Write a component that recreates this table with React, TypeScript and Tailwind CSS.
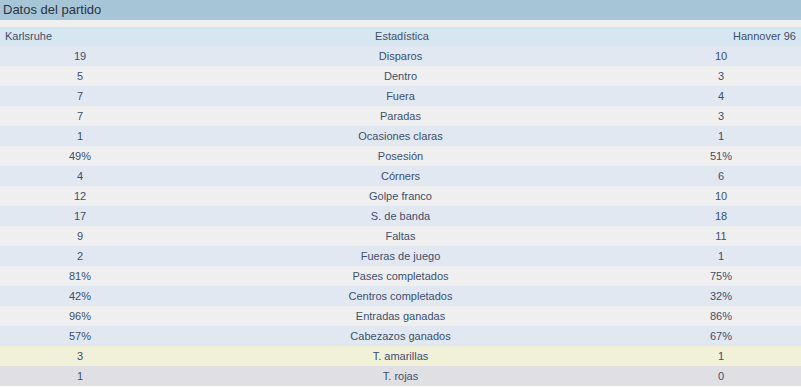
import React from "react";

const rows: [string, string, string][] = [
  ["19", "Disparos", "10"],
  ["5", "Dentro", "3"],
  ["7", "Fuera", "4"],
  ["7", "Paradas", "3"],
  ["1", "Ocasiones claras", "1"],
  ["49%", "Posesión", "51%"],
  ["4", "Córners", "6"],
  ["12", "Golpe franco", "10"],
  ["17", "S. de banda", "18"],
  ["9", "Faltas", "11"],
  ["2", "Fueras de juego", "1"],
  ["81%", "Pases completados", "75%"],
  ["42%", "Centros completados", "32%"],
  ["96%", "Entradas ganadas", "86%"],
  ["57%", "Cabezazos ganados", "67%"],
];

export default function App() {
  return (
    <div className="w-[801px] h-[387px] bg-white text-[11px] text-[#3e4f6e]" style={{ fontFamily: '"Liberation Sans", Arial, sans-serif' }}>
      <div className="h-[20px] bg-[#a6c5d7] pl-[3px] text-[13px] leading-[19px] text-[#2e3440]">Datos del partido</div>
      <div className="h-[7px] bg-[#efefef]" />
      <div className="flex h-[19px] items-center bg-[#d7e7f1] px-[5px] leading-[19px]">
        <div className="w-[155px]">Karlsruhe</div>
        <div className="flex-1 text-center pl-[3px]">Estadística</div>
        <div className="w-[155px] text-right">Hannover 96</div>
      </div>
      {rows.map((r, i) => (
        <div key={i} className={`grid grid-cols-[160px_1fr_160px] h-[20px] leading-[21px] text-center ${i % 2 === 0 ? "bg-[#e1e8f1]" : "bg-[#efefef]"}`}>
          <div>{r[0]}</div>
          <div>{r[1]}</div>
          <div>{r[2]}</div>
        </div>
      ))}
      <div className="grid grid-cols-[160px_1fr_160px] h-[20px] leading-[21px] text-center bg-[#f1f0d8]">
        <div>3</div>
        <div>T. amarillas</div>
        <div>1</div>
      </div>
      <div className="grid grid-cols-[160px_1fr_160px] h-[20px] leading-[21px] text-center bg-[#e0dfe4]">
        <div>1</div>
        <div>T. rojas</div>
        <div>0</div>
      </div>
    </div>
  );
}
